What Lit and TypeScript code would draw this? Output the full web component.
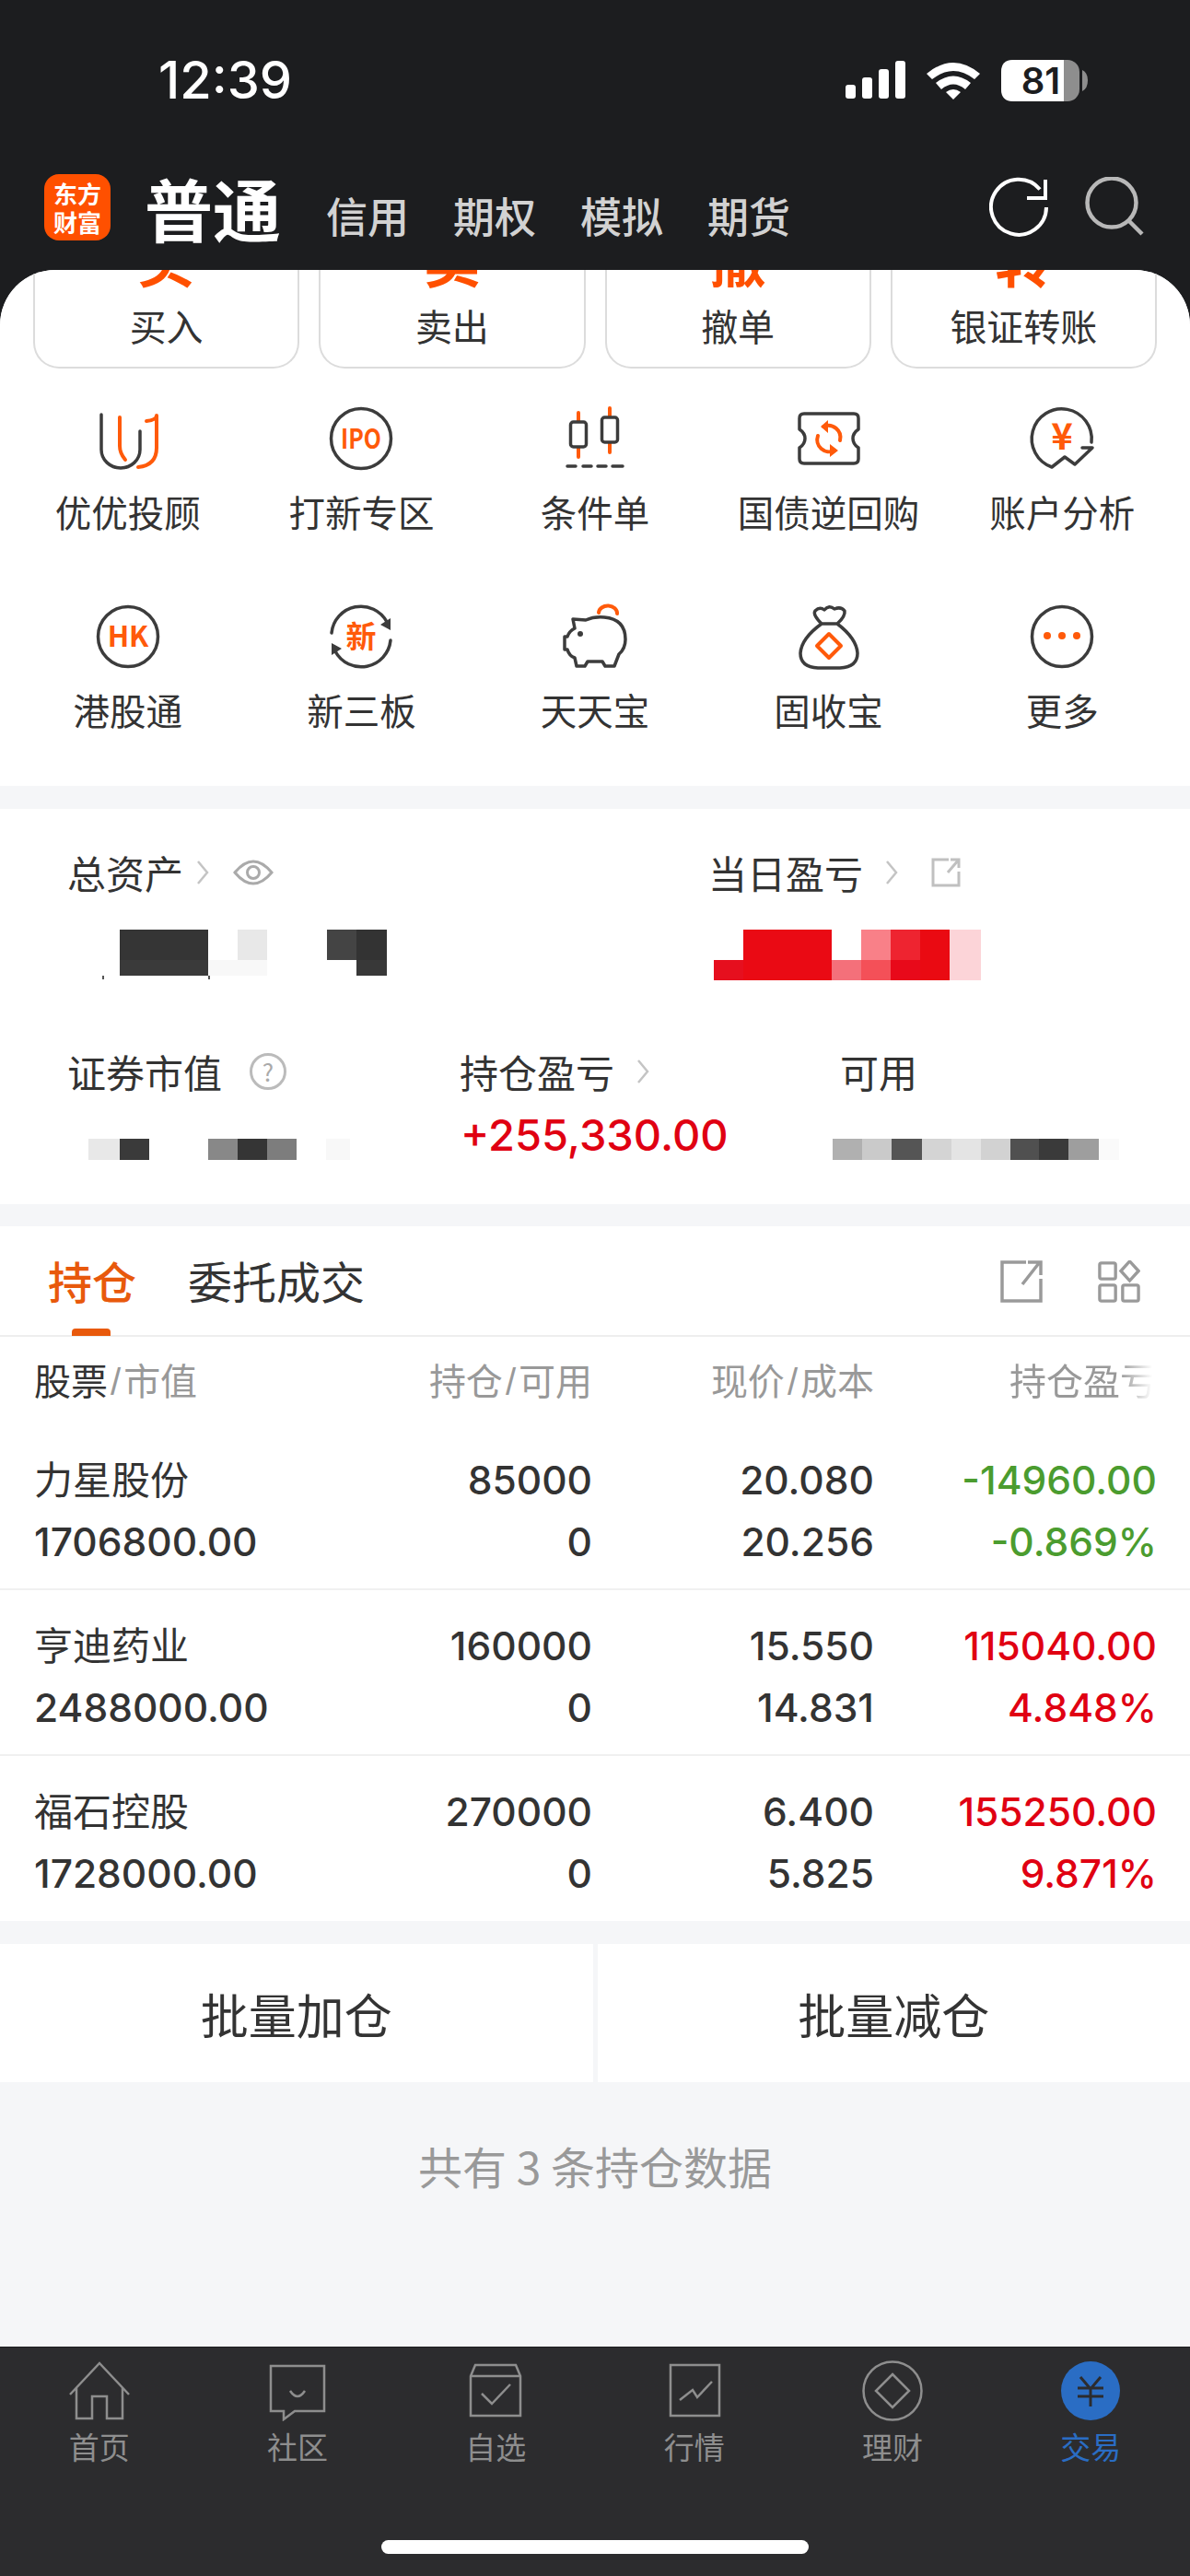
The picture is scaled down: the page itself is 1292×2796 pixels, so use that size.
import { LitElement, html, css } from 'lit';
import { customElement } from 'lit/decorators.js';

const ICONS: Record<string, unknown> = {
  uu: html`<svg viewBox="0 0 68 68"><path class="d" d="M5 8V46a21 20 0 0 0 42 0V26"/><path class="o" d="M25 11V42q0 8 6 15M54 15Q65 14 65 9V44Q65 63 45 65"/></svg>`,
  ipo: html`<svg viewBox="0 0 68 68"><circle class="d" cx="34" cy="34" r="32.5"/><text x="34" y="45" text-anchor="middle" class="t" font-size="30" textLength="44" lengthAdjust="spacingAndGlyphs">IPO</text></svg>`,
  candle: html`<svg viewBox="0 0 68 68"><path class="o" d="M16 6V54M50 1V49"/><rect class="d w" x="7.500" y="16" width="17" height="27" rx="3"/><rect class="d w" x="41.500" y="11" width="17" height="27" rx="3"/><path class="d" d="M4 64h9M21 64h9M37 64h9M53 64h11"/></svg>`,
  ticket: html`<svg viewBox="0 0 68 68"><path class="d" d="M7 7H61Q66 7 66 12V24Q60 28 60 34T66 44V56Q66 61 61 61H7Q2 61 2 56V44Q8 40 8 34T2 24V12Q2 7 7 7Z"/><path class="o" d="M46 36A13 13 0 0 0 28 21M22 31A13 13 0 0 0 40 47"/><path class="of" d="M33 14L25 21L33 28ZM35 40L44 47L35 54Z"/></svg>`,
  analysis: html`<svg viewBox="0 0 68 68"><path class="d" d="M66 38A32.5 32.5 0 1 0 23 65L37 54L48 62L67 44H56"/><text x="34" y="46" text-anchor="middle" class="t" font-size="40">¥</text></svg>`,
  hk: html`<svg viewBox="0 0 68 68"><circle class="d" cx="34" cy="34" r="32.5"/><text x="34" y="45" text-anchor="middle" class="t" font-size="31">HK</text></svg>`,
  xin: html`<svg viewBox="0 0 68 68"><path class="d" d="M2 30A32 32 0 0 1 62 18M66 38A32 32 0 0 1 6 50"/><path class="df" d="M66 14L66 27L55 21ZM2 54L2 41L13 47Z"/><text x="34" y="46" text-anchor="middle" class="t" font-size="33">新</text></svg>`,
  pig: html`<svg viewBox="0 0 68 68"><path class="o" d="M38 8A10 8 0 0 1 58 9"/><path class="d" d="M10 15L24 16Q33 12 44 13Q67 15 67 37Q67 47 60 53L55 66H45L42 61H26L23 66H14L12 57Q6 55 4 48H1V34H4Q6 28 12 25Z"/><circle class="df" cx="18" cy="31" r="3"/></svg>`,
  bag: html`<svg viewBox="0 0 68 68"><path class="d" d="M26 20Q16 10 19 6Q24 1 29 5Q34 -1 40 4Q47 1 51 6Q52 12 43 20Q64 36 65 52Q65 67 46 68H22Q3 67 3 52Q4 36 26 20ZM26 20H43"/><path class="o" d="M34 31L47 44L34 57L21 44Z"/></svg>`,
  more: html`<svg viewBox="0 0 68 68"><circle class="d" cx="34" cy="34" r="32.5"/><circle class="of" cx="18" cy="33" r="4"/><circle class="of" cx="34" cy="33" r="4"/><circle class="of" cx="50" cy="33" r="4"/></svg>`
};

const MENU = [
  ['uu', '优优投顾'], ['ipo', '打新专区'], ['candle', '条件单'], ['ticket', '国债逆回购'], ['analysis', '账户分析'],
  ['hk', '港股通'], ['xin', '新三板'], ['pig', '天天宝'], ['bag', '固收宝'], ['more', '更多']
];

const TRADE = [['买', '买入'], ['卖', '卖出'], ['撤', '撤单'], ['转', '银证转账']];

const HOLDINGS = [
  { name: '力星股份', value: '1706800.00', qty: '85000', price: '20.080', cost: '20.256', pl: '-14960.00', pct: '-0.869%', up: false },
  { name: '亨迪药业', value: '2488000.00', qty: '160000', price: '15.550', cost: '14.831', pl: '115040.00', pct: '4.848%', up: true },
  { name: '福石控股', value: '1728000.00', qty: '270000', price: '6.400', cost: '5.825', pl: '155250.00', pct: '9.871%', up: true }
];

const TABS: [string, unknown][] = [
  ['首页', html`<svg viewBox="0 0 66 66"><path d="M1 37L33 3L65 37M8 29V63H25V39H41V63H58V29"/></svg>`],
  ['社区', html`<svg viewBox="0 0 66 66"><path d="M4 6H62V55H30L18 64V55H4ZM25 33Q33 45 41 33"/></svg>`],
  ['自选', html`<svg viewBox="0 0 66 66"><path d="M6 60V17L11 5H55L60 17V60ZM6 17H60M18 36L29 47L49 26"/></svg>`],
  ['行情', html`<svg viewBox="0 0 66 66"><path d="M7 5H60V60H7ZM17 43L31 32L36 40L52 23"/></svg>`],
  ['理财', html`<svg viewBox="0 0 66 66"><circle cx="33" cy="33" r="31.5"/><path d="M33 15L51 33L33 51L15 33Z"/></svg>`],
  ['交易', html`<svg viewBox="0 0 66 66"><circle class="fill" cx="33" cy="33" r="32"/><path class="yen" d="M22 18L33 31L44 18M19 30H47M19 39H47M33 31V50"/></svg>`]
];

type Cell = [number, string];

const TOTAL: Cell[][] = [
  [[20, '#fff'], [96, '#353535'], [32, '#fff'], [32, '#e8e8e8'], [65, '#fff'], [32, '#444'], [33, '#333']],
  [[20, '#fff'], [96, '#3a3a3a'], [32, '#f8f8f8'], [32, '#f8f8f8'], [65, '#fff'], [32, '#fff'], [33, '#383838']],
  [[1, '#fff'], [2, '#555'], [113, '#fff'], [2, '#555']]
];
const TODAY: Cell[][] = [
  [[32, '#fff'], [96, '#ea0a14'], [32, '#fff'], [32, '#f98088'], [32, '#ee2430'], [32, '#ea0a12'], [34, '#fcd4d8']],
  [[32, '#e60f1e'], [96, '#ea0a14'], [32, '#f4707a'], [32, '#f45058'], [32, '#e8091a'], [32, '#ea0a12'], [34, '#fcd4d8']]
];
const MARKET: Cell[][] = [
  [[34, '#e8e8e8'], [32, '#3a3a3a'], [64, '#fff'], [32, '#888'], [32, '#353535'], [32, '#7d7d7d'], [32, '#fff'], [26, '#f8f8f8']]
];
const AVAILABLE: Cell[][] = [
  [[32, '#b0b0b0'], [32, '#cacaca'], [33, '#555'], [32, '#d4d4d4'], [32, '#e4e4e4'], [32, '#d2d2d2'], [31, '#505050'], [32, '#3a3a3a'], [33, '#9e9e9e'], [22, '#fafafa']]
];

const chevron = html`<svg class="chevron" viewBox="0 0 14 26"><path d="M2 1L12 13L2 25"/></svg>`;

@customElement('app-root')
export class AppRoot extends LitElement {
  mosaic(rows: Cell[][], rowHeights: number[]) {
    return html`
      <div class="mosaic">
        ${rows.map((cells, i) => html`
          <div class="mosaic-row" style="height:${rowHeights[i]}px">
            ${cells.map(([w, c]) => html`<i style="width:${w}px;background:${c}"></i>`)}
          </div>
        `)}
      </div>
    `;
  }

  renderStatus() {
    return html`
      <div class="status">
        <span class="time">12:39</span>
        <svg class="signal" viewBox="0 0 66 41" fill="#fff">
          <rect x="0" y="26" width="11" height="15" rx="3"/>
          <rect x="18" y="18" width="11" height="23" rx="3"/>
          <rect x="36" y="9" width="11" height="32" rx="3"/>
          <rect x="54" y="0" width="11" height="41" rx="3"/>
        </svg>
        <svg class="wifi" viewBox="0 0 58 42">
          <path d="M0 14Q29 -10 58 14L52 20Q29 2 6 20Z" fill="#fff"/>
          <path d="M10 24Q29 9 48 24L42 31Q29 20 16 31Z" fill="#fff"/>
          <path d="M21 34Q29 28 37 34L29 42Z" fill="#fff"/>
        </svg>
        <svg class="battery" viewBox="0 0 94 45">
          <rect x="0" y="0" width="85" height="45" rx="13" fill="#8e8e8e"/>
          <path d="M13 0H68V45H13Q0 45 0 32V13Q0 0 13 0Z" fill="#fff"/>
          <path d="M88 11Q94 14 94 22Q94 31 88 34Z" fill="#8e8e8e"/>
          <text x="43" y="37" text-anchor="middle" class="battery-text">81</text>
        </svg>
      </div>
    `;
  }

  renderHeader() {
    return html`
      <header class="header">
        <div class="logo"><span>东方</span><span>财富</span></div>
        <span class="mode-active">普通</span>
        <nav class="modes">
          <span>信用</span><span>期权</span><span>模拟</span><span>期货</span>
        </nav>
        <div class="actions">
          <svg class="refresh" viewBox="0 0 66 66">
            <path d="M62 33A30 30 0 1 1 55 13.500"/>
            <path d="M61 3V23H41"/>
          </svg>
          <svg class="search" viewBox="0 0 66 66">
            <circle cx="29" cy="28" r="26.500"/>
            <path d="M47 47L62 62"/>
          </svg>
        </div>
      </header>
    `;
  }

  renderQuick() {
    return html`
      <section class="quick">
        <div class="trade-row">
          ${TRADE.map(([glyph, label]) => html`
            <div class="trade-btn">
              <span class="trade-glyph">${glyph}</span>
              <span class="trade-label">${label}</span>
            </div>
          `)}
        </div>
        <div class="menu">
          ${MENU.map(([icon, label]) => html`
            <div class="menu-item">
              <div class="menu-icon">${ICONS[icon]}</div>
              <span>${label}</span>
            </div>
          `)}
        </div>
      </section>
    `;
  }

  renderAssets() {
    return html`
      <section class="assets">
        <div class="assets-top">
          <div class="asset-total">
            <div class="label">
              总资产 ${chevron}
              <svg class="eye" viewBox="0 0 44 30">
                <path d="M2 15Q22 -9 42 15Q22 39 2 15Z"/>
                <circle cx="22" cy="15" r="6.500"/>
              </svg>
            </div>
            <div class="mask-total">${this.mosaic(TOTAL, [33, 17, 4])}</div>
          </div>
          <div class="asset-today">
            <div class="label wide">
              当日盈亏 ${chevron}
              <svg class="share" viewBox="0 0 34 34">
                <path d="M20 3H3V31H31V16M19 17L31 3M22 3H31V12"/>
              </svg>
            </div>
            <div class="mask-today">${this.mosaic(TODAY, [33, 22])}</div>
          </div>
        </div>
        <div class="assets-bottom">
          <div class="col-market">
            <div class="label">证券市值 <span class="help">?</span></div>
            <div class="value">${this.mosaic(MARKET, [23])}</div>
          </div>
          <div class="col-profit">
            <div class="label wide">持仓盈亏 ${chevron}</div>
            <div class="value profit">+255,330.00</div>
          </div>
          <div class="col-avail">
            <div class="label">可用</div>
            <div class="value">${this.mosaic(AVAILABLE, [23])}</div>
          </div>
        </div>
      </section>
    `;
  }

  renderPositions() {
    return html`
      <section class="positions">
        <div class="tabs">
          <span class="tab active">持仓</span>
          <span class="tab">委托成交</span>
          <div class="tab-tools">
            <svg class="tool" viewBox="0 0 46 46"><path d="M28 2H2V44H44V20M24 26L42 3M30 2H44V16"/></svg>
            <svg class="tool" viewBox="0 0 48 48">
              <rect x="2" y="3" width="18" height="18" rx="2"/>
              <path d="M36 1L46 12L36 23L26 12Z"/>
              <rect x="2" y="28" width="18" height="18" rx="2"/>
              <rect x="28" y="28" width="18" height="18" rx="2"/>
            </svg>
          </div>
        </div>
        <div class="thead">
          <span><b>股票</b><em>/</em>市值</span>
          <span class="r">持仓<em>/</em>可用</span>
          <span class="r">现价<em>/</em>成本</span>
          <span class="r fade">持仓盈亏</span>
        </div>
        ${HOLDINGS.map(h => html`
          <div class="row">
            <span class="name">${h.name}</span>
            <span class="num r">${h.qty}</span>
            <span class="num r">${h.price}</span>
            <span class="num r ${h.up ? 'up' : 'down'}">${h.pl}</span>
            <span class="num">${h.value}</span>
            <span class="num r">0</span>
            <span class="num r">${h.cost}</span>
            <span class="num r ${h.up ? 'up' : 'down'}">${h.pct}</span>
          </div>
        `)}
      </section>
    `;
  }

  render() {
    return html`
      <div class="page">
        ${this.renderStatus()}
        ${this.renderHeader()}
        <main class="main">
          ${this.renderQuick()}
          ${this.renderAssets()}
          ${this.renderPositions()}
          <div class="batch">
            <button>批量加仓</button>
            <button>批量减仓</button>
          </div>
          <div class="note">共有 3 条持仓数据</div>
        </main>
        <footer class="footer">
          <div class="tabbar">
            ${TABS.map(([label, icon], i) => html`
              <div class="tabbar-item ${i === 5 ? 'current' : ''}">
                ${icon}
                <span>${label}</span>
              </div>
            `)}
          </div>
          <div class="home-bar"></div>
        </footer>
      </div>
    `;
  }

  static styles = css`
    :host {
      display: block;
      font-family: "Noto Sans CJK SC", "Noto Sans", sans-serif;
      color: #333;
    }
    .page {
      width: 1292px;
      height: 2796px;
      display: flex;
      flex-direction: column;
      background: #1c1d1f;
      overflow: hidden;
    }

    .status {
      height: 174px;
      display: flex;
      align-items: center;
      padding-left: 172px;
      box-sizing: border-box;
    }
    .time {
      font: 500 56px Inter, sans-serif;
      color: #fff;
      margin-right: auto;
    }
    .signal { width: 66px; height: 41px; margin-top: -2px; }
    .wifi { width: 58px; height: 42px; margin: 0 23px 0 22px; }
    .battery { width: 94px; height: 45px; margin-right: 111px; }
    .battery-text { font: 600 40px Inter, sans-serif; fill: #1c1d1f; }

    .header {
      height: 119px;
      display: flex;
      align-items: flex-start;
      padding: 15px 0 0 48px;
      box-sizing: border-box;
    }
    .logo {
      width: 72px;
      height: 72px;
      border-radius: 16px;
      background: #ff5000;
      color: #fff;
      display: flex;
      flex-direction: column;
      align-items: center;
      justify-content: center;
      font: 700 26px/31px "Noto Sans CJK SC", sans-serif;
      margin-right: 37px;
    }
    .mode-active {
      font-size: 74px;
      font-weight: 700;
      line-height: 72px;
      color: #fff;
      margin-right: 49px;
    }
    .modes {
      display: flex;
      gap: 48px;
      font-size: 45px;
      font-weight: 500;
      line-height: 44px;
      color: #d2d2d2;
      margin-top: 23px;
    }
    .actions {
      margin-left: auto;
      display: flex;
      gap: 38px;
      margin-right: 48px;
      padding-top: 3px;
    }
    .actions svg { width: 66px; height: 66px; fill: none; }
    .refresh { stroke: #fff; stroke-width: 4px; }
    .search { stroke: #b8b8b8; stroke-width: 4.500px; }

    .main {
      flex: 1;
      background: #f5f6f8;
      border-radius: 60px 60px 0 0;
      overflow: hidden;
      display: flex;
      flex-direction: column;
    }

    .quick {
      background: #fff;
      height: 560px;
    }
    .trade-row {
      display: flex;
      gap: 21px;
      padding: 0 36px;
      height: 107px;
      align-items: flex-end;
    }
    .trade-btn {
      flex: 1;
      height: 160px;
      box-sizing: border-box;
      border: 2px solid #dcdcdc;
      border-top: 0;
      border-radius: 0 0 28px 28px;
      display: flex;
      flex-direction: column;
      align-items: center;
      flex-shrink: 0;
    }
    .trade-glyph {
      font-size: 62px;
      font-weight: 700;
      line-height: 62px;
      color: #ff5000;
      margin-top: 9px;
    }
    .trade-label {
      font-size: 40px;
      line-height: 50px;
      margin-top: 17px;
    }
    .menu {
      display: grid;
      grid-template-columns: repeat(5, 1fr);
      grid-auto-rows: 215px;
      padding: 42px 12px 0;
    }
    .menu-item {
      display: flex;
      flex-direction: column;
      align-items: center;
      font-size: 39.500px;
      line-height: 50px;
    }
    .menu-icon { width: 68px; height: 68px; margin-bottom: 20px; }
    .menu-icon svg { width: 68px; height: 68px; overflow: visible; }
    .menu-icon .d { fill: none; stroke: #3c3c3c; stroke-width: 3.500px; stroke-linejoin: round; stroke-linecap: round; }
    .menu-icon .d.w { fill: #fff; }
    .menu-icon .df { fill: #3c3c3c; }
    .menu-icon .o { fill: none; stroke: #ff5a0a; stroke-width: 4px; stroke-linecap: round; stroke-linejoin: round; }
    .menu-icon .of { fill: #ff5a0a; }
    .menu-icon .t { fill: #ff5a0a; font-family: "Noto Sans CJK SC", sans-serif; font-weight: 700; }

    .assets {
      background: #fff;
      height: 429px;
      margin-top: 25px;
      padding: 45px 0 0 73px;
      box-sizing: border-box;
    }
    .assets-top { display: flex; height: 216px; }
    .asset-total { width: 696px; }
    .label {
      display: flex;
      align-items: center;
      font-size: 42px;
      line-height: 48px;
      height: 48px;
    }
    .chevron {
      width: 14px;
      height: 26px;
      margin-left: 14px;
      fill: none;
      stroke: #c4c4c4;
      stroke-width: 2.500px;
    }
    .label.wide .chevron { margin-left: 24px; }
    .eye {
      width: 44px;
      height: 30px;
      margin-left: 26px;
      fill: none;
      stroke: #aaa;
      stroke-width: 3px;
    }
    .share {
      width: 34px;
      height: 34px;
      margin-left: 35px;
      fill: none;
      stroke: #c0c0c0;
      stroke-width: 3px;
    }
    .mask-total { margin: 38px 0 0 37px; }
    .mask-today { margin: 38px 0 0 6px; }
    .mosaic-row { display: flex; }
    .mosaic-row i { display: block; height: 100%; flex-shrink: 0; }

    .assets-bottom { display: flex; }
    .col-market { width: 426px; }
    .col-profit { width: 413px; }
    .help {
      width: 34px;
      height: 34px;
      margin-left: 30px;
      border: 3px solid #bbb;
      border-radius: 50%;
      color: #aaa;
      font-size: 26px;
      line-height: 34px;
      text-align: center;
    }
    .value { height: 60px; padding-top: 31px; box-sizing: border-box; margin-top: 18px; }
    .col-market .value { padding-left: 23px; }
    .col-avail .value { margin-left: -8px; }
    .value.profit {
      padding-top: 0;
      margin-top: 15px;
      margin-left: 1px;
      font: 500 47px/60px Inter, sans-serif;
      color: #e00012;
    }

    .positions {
      background: #fff;
      margin-top: 24px;
    }
    .tabs {
      height: 120px;
      box-sizing: border-box;
      border-bottom: 2px solid #eee;
      display: flex;
      align-items: flex-start;
      padding: 30px 54px 0 52px;
      gap: 56px;
      font-size: 48px;
      line-height: 56px;
    }
    .tab.active { color: #e8590c; font-weight: 500; position: relative; height: 89px; }
    .tab.active::after {
      content: '';
      position: absolute;
      left: 26px;
      width: 42px;
      bottom: 0;
      height: 8px;
      border-radius: 4px 4px 0 0;
      background: #e8590c;
    }
    .tab-tools { margin-left: auto; display: flex; gap: 60px; padding-top: 7px; }
    .tool { width: 46px; height: 46px; fill: none; stroke: #9a9a9a; stroke-width: 3.500px; }
    .thead, .row {
      display: grid;
      grid-template-columns: 300px 306px 306px 307px;
      padding: 0 35px 0 37px;
    }
    .thead {
      height: 92px;
      padding-bottom: 3px;
      align-items: center;
      font-size: 40px;
      color: #999;
    }
    .thead b { font-weight: 400; color: #333; }
    .thead em { font: 40px "Liberation Sans", sans-serif; margin: 0 3px; }
    .fade {
      -webkit-mask-image: linear-gradient(to right, #000 75%, transparent 97%);
      mask-image: linear-gradient(to right, #000 75%, transparent 97%);
      justify-self: end;
    }
    .r { text-align: right; }
    .row {
      height: 180px;
      box-sizing: border-box;
      padding-top: 27px;
      border-bottom: 2px solid #f0f0f0;
      grid-auto-rows: 67px;
      align-items: center;
    }
    .row:last-child { height: 179px; border-bottom: 0; }
    .name { font-size: 42px; margin-bottom: 6px; }
    .num { font: 500 42.500px Inter, sans-serif; }
    .up { color: #e00012; }
    .down { color: #4b9c2f; }

    .batch {
      margin-top: 25px;
      height: 150px;
      display: flex;
      gap: 5px;
    }
    .batch button {
      flex: 1;
      border: 0;
      background: #fff;
      color: #333;
      font: 400 52px "Noto Sans CJK SC", sans-serif;
      padding: 0;
    }
    .note {
      text-align: center;
      font-size: 48px;
      line-height: 60px;
      margin-top: 60px;
      color: #999;
    }

    .footer {
      height: 249px;
      background: #2c2c2e;
      border-top: 1px solid #1c1c1e;
      box-sizing: border-box;
      position: relative;
    }
    .tabbar { display: grid; grid-template-columns: repeat(6, 1fr); padding-top: 14px; }
    .tabbar-item {
      display: flex;
      flex-direction: column;
      align-items: center;
      font-size: 33px;
      line-height: 44px;
      color: #8e8e8e;
      gap: 5px;
    }
    .tabbar-item svg {
      width: 66px;
      height: 66px;
      fill: none;
      stroke: #8e8e8e;
      stroke-width: 2.500px;
    }
    .tabbar-item .fill { fill: #2a6dc4; stroke: none; }
    .tabbar-item .yen { stroke: #2c2c2e; stroke-width: 3px; }
    .tabbar-item.current { color: #2a6dc4; }
    .home-bar {
      position: absolute;
      left: 414px;
      top: 209px;
      width: 464px;
      height: 15px;
      border-radius: 8px;
      background: #fff;
    }
  `;
}
